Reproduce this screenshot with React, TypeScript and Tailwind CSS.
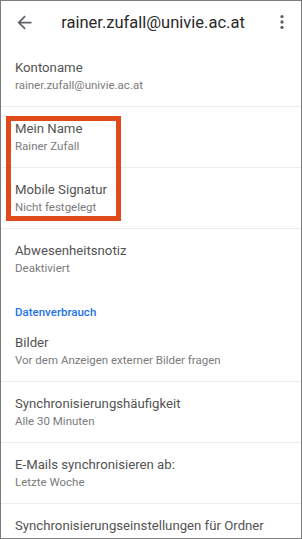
import { Fragment } from 'react'

interface Setting {
  title: string
  value?: string
}

const TOP: Setting[] = [
  { title: 'Kontoname', value: 'rainer.zufall@univie.ac.at' },
  { title: 'Mein Name', value: 'Rainer Zufall' },
  { title: 'Mobile Signatur', value: 'Nicht festgelegt' },
  { title: 'Abwesenheitsnotiz', value: 'Deaktiviert' },
]

const DATA: Setting[] = [
  { title: 'Bilder', value: 'Vor dem Anzeigen externer Bilder fragen' },
  { title: 'Synchronisierungshäufigkeit', value: 'Alle 30 Minuten' },
  { title: 'E-Mails synchronisieren ab:', value: 'Letzte Woche' },
  { title: 'Synchronisierungseinstellungen für Ordner' },
]

function Row({ s }: { s: Setting }) {
  return (
    <div className="h-[60px] pl-[14px] pt-[13px]">
      <div className="text-[13.2px] leading-[18px] text-[#535353]">{s.title}</div>
      {s.value && <div className="text-[11.5px] leading-[16px] text-[#7b7b7b]">{s.value}</div>}
    </div>
  )
}

function Divider() {
  return <div className="h-px bg-[#ececec]" />
}

export default function App() {
  return (
    <div
      className="relative w-[302px] h-[539px] overflow-hidden bg-white border border-[#7d7d7d]"
      style={{ fontFamily: 'Roboto, "Liberation Sans", sans-serif' }}
    >
      <div className="h-[45px] flex items-center relative">
        <svg className="absolute left-[13px] top-[11px]" width="21" height="21" viewBox="0 0 24 24" fill="#5f6368">
          <path d="M20 11H7.83l5.59-5.59L12 4l-8 8 8 8 1.41-1.41L7.83 13H20v-2z" />
        </svg>
        <div className="flex-1 text-center text-[16.5px] text-[#2a2a2a] pl-[4px]">rainer.zufall@univie.ac.at</div>
        <svg className="absolute right-[9px] top-[11px]" width="20" height="20" viewBox="0 0 24 24" fill="#5f6368">
          <circle cx="12" cy="5.5" r="2" />
          <circle cx="12" cy="12" r="2" />
          <circle cx="12" cy="18.5" r="2" />
        </svg>
      </div>

      {TOP.map((s, i) => (
        <Fragment key={s.title}>
          <Row s={s} />
          {i < TOP.length - 1 && <Divider />}
        </Fragment>
      ))}

      <div className="h-[32px] pl-[14px] pt-[15px] text-[11.5px] leading-[16px] font-medium text-[#1a73e8]">
        Datenverbrauch
      </div>

      {DATA.map((s, i) => (
        <Fragment key={s.title}>
          <Row s={s} />
          {i < DATA.length - 1 && <Divider />}
        </Fragment>
      ))}

      {/* highlight box */}
      <div className="absolute left-[5px] top-[115px] w-[115px] h-[105px] border-[5px] border-[#e04a1a]" />
    </div>
  )
}
